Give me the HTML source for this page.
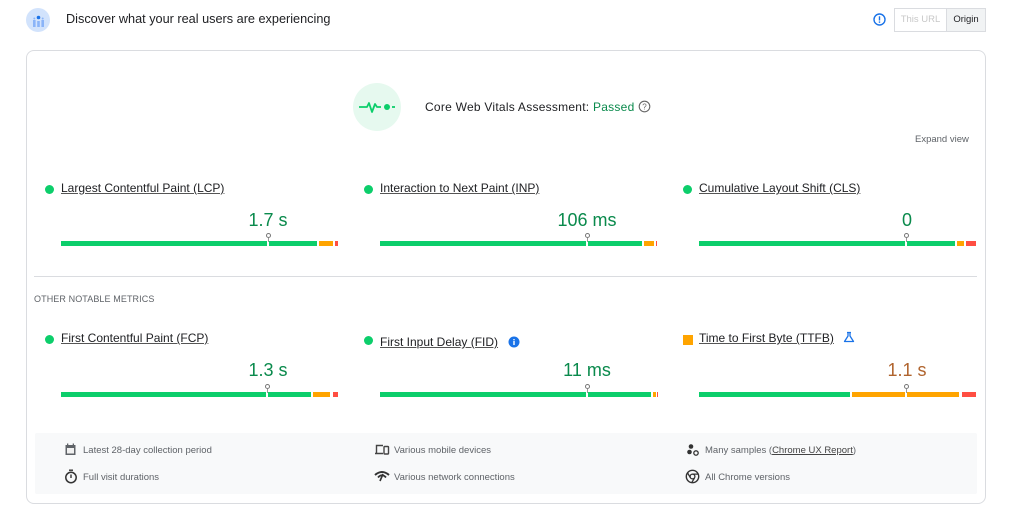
<!DOCTYPE html>
<html><head><meta charset="utf-8"><style>
*{margin:0;padding:0;box-sizing:border-box}
body{width:1014px;height:517px;background:#fff;font-family:"Liberation Sans",Arial,sans-serif;position:relative;overflow:hidden;color:#202124}
.a{position:absolute}
.t{font-size:12px;color:#202124;text-decoration:underline;text-decoration-color:#555;white-space:nowrap}
.dot{width:9px;height:9px;border-radius:50%;background:#0cce6b}
.v{font-size:18px;color:#0a8a4c;white-space:nowrap;transform:translateX(-50%)}
.seg{height:5px;top:0}
.mk{width:5px;height:5px;border:1px solid #777;border-radius:50%;background:#fff;top:-8px}
.mkl{width:2px;height:7px;background:#fff;top:-2px}
.mkl2{width:1px;height:4px;background:#999;top:-3px}
.f{font-size:9.5px;color:#5f6368;white-space:nowrap}
</style></head><body>
<div class="a" style="left:26px;top:8px;width:24px;height:24px;border-radius:50%;background:#d2e3fc"></div>
<svg class="a" style="left:26px;top:8px" width="24" height="24"><circle cx="12.5" cy="9.5" r="1.8" fill="#1a73e8"/><rect x="7" y="12" width="2.6" height="7" fill="#8ab4f8"/><rect x="11.2" y="13" width="2.6" height="6" fill="#8ab4f8"/><rect x="15.4" y="12" width="2.6" height="7" fill="#8ab4f8"/><circle cx="8.3" cy="10.5" r="1" fill="#8ab4f8"/><circle cx="16.7" cy="10.5" r="1" fill="#8ab4f8"/></svg>
<div class="a" style="left:66px;top:12px;font-size:12.7px;color:#202124">Discover what your real users are experiencing</div>
<svg class="a" style="left:873px;top:13px" width="13" height="13"><circle cx="6.5" cy="6.5" r="5.5" fill="none" stroke="#1a73e8" stroke-width="1.4"/><rect x="5.8" y="3.3" width="1.4" height="4.2" fill="#1a73e8"/><rect x="5.8" y="8.4" width="1.4" height="1.4" fill="#1a73e8"/></svg>
<div class="a" style="left:894px;top:8px;width:53px;height:24px;border:1px solid #dadce0;font-size:9.5px;color:#c8c8c8;line-height:22px;text-align:center">This URL</div>
<div class="a" style="left:946px;top:8px;width:40px;height:24px;border:1px solid #dadce0;background:#f1f3f4;font-size:9.5px;color:#202124;line-height:22px;text-align:center">Origin</div>
<div class="a" style="left:26px;top:50px;width:960px;height:454px;border:1px solid #dadce0;border-radius:8px"></div>
<div class="a" style="left:353px;top:83px;width:48px;height:48px;border-radius:50%;background:#e6f9ef"></div>
<svg class="a" style="left:353px;top:83px" width="48" height="48"><path d="M6 24H14L16 20L19 29L22 21L24 24H28" fill="none" stroke="#0cce6b" stroke-width="1.8" stroke-linejoin="round"/><circle cx="34" cy="24" r="3" fill="#0cce6b"/><path d="M39 24H42" stroke="#0cce6b" stroke-width="1.8"/></svg>
<div class="a" style="left:425px;top:100px;font-size:12px;letter-spacing:0.25px;color:#202124;white-space:nowrap">Core Web Vitals Assessment: <span style="color:#0a8a4c">Passed</span></div>
<svg class="a" style="left:638px;top:100px" width="13" height="13"><circle cx="6.5" cy="6.5" r="5.3" fill="none" stroke="#666" stroke-width="1.1"/><text x="6.5" y="9.6" font-size="8" text-anchor="middle" fill="#666" font-family="Liberation Sans">?</text></svg>
<div class="a" style="left:915px;top:134px;font-size:9.5px;color:#5f6368">Expand view</div>

<div class="a dot" style="left:45px;top:185px"></div>
<div class="a t" style="left:61px;top:181px">Largest Contentful Paint (LCP)</div>
<div class="a v" style="left:268px;top:210px">1.7 s</div>
<div class="a" style="left:0;top:241px;width:1014px;height:5px">
 <div class="a seg" style="left:61px;width:256px;background:#0cce6b"></div>
 <div class="a seg" style="left:319px;width:14px;background:#ffa400"></div>
 <div class="a seg" style="left:335px;width:3px;background:#ff4e42"></div>
 <div class="a mkl" style="left:267px"></div><div class="a mkl2" style="left:268px"></div><div class="a mk" style="left:266px"></div>
</div>
<div class="a dot" style="left:364px;top:185px"></div>
<div class="a t" style="left:380px;top:181px">Interaction to Next Paint (INP)</div>
<div class="a v" style="left:587px;top:210px">106 ms</div>
<div class="a" style="left:0;top:241px;width:1014px;height:5px">
 <div class="a seg" style="left:380px;width:262px;background:#0cce6b"></div>
 <div class="a seg" style="left:644px;width:10px;background:#ffa400"></div>
 <div class="a seg" style="left:656px;width:1px;background:#ff4e42"></div>
 <div class="a mkl" style="left:586px"></div><div class="a mkl2" style="left:587px"></div><div class="a mk" style="left:585px"></div>
</div>
<div class="a dot" style="left:683px;top:185px"></div>
<div class="a t" style="left:699px;top:181px">Cumulative Layout Shift (CLS)</div>
<div class="a v" style="left:907px;top:210px">0</div>
<div class="a" style="left:0;top:241px;width:1014px;height:5px">
 <div class="a seg" style="left:699px;width:256px;background:#0cce6b"></div>
 <div class="a seg" style="left:957px;width:7px;background:#ffa400"></div>
 <div class="a seg" style="left:966px;width:10px;background:#ff4e42"></div>
 <div class="a mkl" style="left:905px"></div><div class="a mkl2" style="left:906px"></div><div class="a mk" style="left:904px"></div>
</div>

<div class="a" style="left:34px;top:276px;width:943px;height:1px;background:#dadce0"></div>
<div class="a" style="left:34px;top:294px;font-size:9px;color:#5f6368;letter-spacing:.1px">OTHER NOTABLE METRICS</div>

<div class="a dot" style="left:45px;top:335px"></div>
<div class="a t" style="left:61px;top:331px">First Contentful Paint (FCP)</div>
<div class="a v" style="left:268px;top:360px">1.3 s</div>
<div class="a" style="left:0;top:392px;width:1014px;height:5px">
 <div class="a seg" style="left:61px;width:250px;background:#0cce6b"></div>
 <div class="a seg" style="left:313px;width:17px;background:#ffa400"></div>
 <div class="a seg" style="left:333px;width:5px;background:#ff4e42"></div>
 <div class="a mkl" style="left:266px"></div><div class="a mkl2" style="left:267px"></div><div class="a mk" style="left:265px"></div>
</div>
<div class="a dot" style="left:364px;top:336px"></div>
<div class="a t" style="left:380px;top:335px">First Input Delay (FID)</div>
<svg class="a" style="left:508px;top:336px" width="12" height="12"><circle cx="6" cy="6" r="5.5" fill="#1a73e8"/><rect x="5.3" y="5" width="1.4" height="4" fill="#fff"/><rect x="5.3" y="3" width="1.4" height="1.3" fill="#fff"/></svg>
<div class="a v" style="left:587px;top:360px">11 ms</div>
<div class="a" style="left:0;top:392px;width:1014px;height:5px">
 <div class="a seg" style="left:380px;width:271px;background:#0cce6b"></div>
 <div class="a seg" style="left:653px;width:3px;background:#ffa400"></div>
 <div class="a seg" style="left:657px;width:1px;background:#ff4e42"></div>
 <div class="a mkl" style="left:586px"></div><div class="a mkl2" style="left:587px"></div><div class="a mk" style="left:585px"></div>
</div>
<div class="a" style="left:683px;top:335px;width:10px;height:10px;background:#ffa400"></div>
<div class="a t" style="left:699px;top:331px">Time to First Byte (TTFB)</div>
<svg class="a" style="left:843px;top:331px" width="12" height="12"><path d="M4 1.5H8M5 1.5V5L1.5 10.5H10.5L7 5V1.5" fill="none" stroke="#1a73e8" stroke-width="1.3" stroke-linejoin="round"/></svg>
<div class="a v" style="left:907px;top:360px;color:#b0642e">1.1 s</div>
<div class="a" style="left:0;top:392px;width:1014px;height:5px">
 <div class="a seg" style="left:699px;width:151px;background:#0cce6b"></div>
 <div class="a seg" style="left:852px;width:107px;background:#ffa400"></div>
 <div class="a seg" style="left:962px;width:14px;background:#ff4e42"></div>
 <div class="a mkl" style="left:905px"></div><div class="a mkl2" style="left:906px"></div><div class="a mk" style="left:904px"></div>
</div>

<div class="a" style="left:35px;top:433px;width:942px;height:61px;background:#f8f9fa;border-radius:2px"></div>
<svg class="a" style="left:64px;top:443px" width="13" height="13"><rect x="1.5" y="2" width="10" height="10" fill="#5f6368"/><rect x="3" y="5" width="7" height="5.5" fill="#f0f0f0"/><rect x="3" y="0.5" width="1.3" height="2" fill="#5f6368"/><rect x="8.7" y="0.5" width="1.3" height="2" fill="#5f6368"/></svg>
<div class="a f" style="left:83px;top:445px">Latest 28-day collection period</div>
<svg class="a" style="left:64px;top:469px" width="14" height="15"><rect x="5" y="0.5" width="4" height="1.4" fill="#333"/><circle cx="7" cy="8.5" r="5.2" fill="none" stroke="#333" stroke-width="1.5"/><path d="M7 5.5V9" stroke="#333" stroke-width="1.4"/></svg>
<div class="a f" style="left:83px;top:472px">Full visit durations</div>
<svg class="a" style="left:374px;top:443px" width="16" height="13"><path d="M2.5 10V2.5H9" fill="none" stroke="#444" stroke-width="1.4"/><path d="M1 10.5H9" stroke="#444" stroke-width="1.5"/><rect x="10" y="3.5" width="4.5" height="7.5" rx="0.8" fill="none" stroke="#444" stroke-width="1.4"/></svg>
<div class="a f" style="left:394px;top:445px">Various mobile devices</div>
<svg class="a" style="left:374px;top:470px" width="16" height="12"><path d="M1 5Q8 -1 15 5" fill="none" stroke="#333" stroke-width="2"/><path d="M4 7.5Q8 3 12 7.5" fill="none" stroke="#333" stroke-width="1.8"/><path d="M9 4L6 11" stroke="#333" stroke-width="1.6"/></svg>
<div class="a f" style="left:394px;top:472px">Various network connections</div>
<svg class="a" style="left:686px;top:443px" width="14" height="14"><circle cx="5" cy="3.5" r="2.3" fill="#333"/><circle cx="3.5" cy="9" r="2.3" fill="#333"/><circle cx="10" cy="10" r="2.2" fill="none" stroke="#333" stroke-width="1.3"/></svg>
<div class="a f" style="left:705px;top:445px">Many samples (<span style="text-decoration:underline;color:#444">Chrome UX Report</span>)</div>
<svg class="a" style="left:685px;top:469px" width="15" height="15"><circle cx="7.5" cy="7.5" r="6.2" fill="none" stroke="#333" stroke-width="1.4"/><circle cx="7.5" cy="7.5" r="2.4" fill="none" stroke="#333" stroke-width="1.3"/><path d="M7.5 5.1H13M5.4 8.7L2.6 4M9.6 8.7L6.8 13.6" stroke="#333" stroke-width="1.3"/></svg>
<div class="a f" style="left:705px;top:472px">All Chrome versions</div>
</body></html>
